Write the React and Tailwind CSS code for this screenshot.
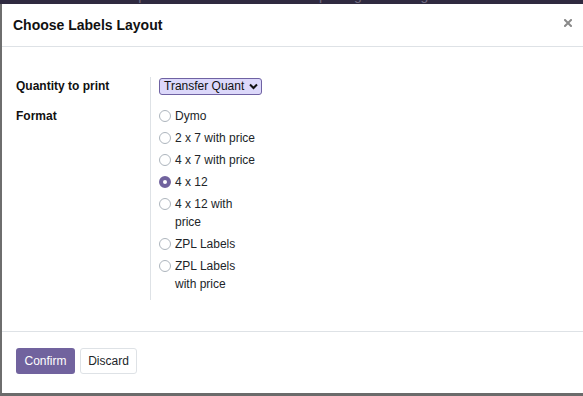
const options = [
  { label: "Dymo" },
  { label: "2 x 7 with price" },
  { label: "4 x 7 with price" },
  { label: "4 x 12", checked: true },
  { label: "4 x 12 with price" },
  { label: "ZPL Labels" },
  { label: "ZPL Labels with price" },
];

const Radio = ({ checked }) =>
  checked ? (
    <span className="mt-[3px] box-border h-[12px] w-[12px] shrink-0 rounded-full border-[4px] border-[#71639e] bg-white" />
  ) : (
    <span className="mt-[3px] box-border h-[12px] w-[12px] shrink-0 rounded-full border border-[#adb5bd] bg-white" />
  );

const App = () => {
  return (
    <div
      className="flex h-[396px] w-[583px] flex-col overflow-hidden bg-[#6b6b6b] text-[#212529]"
      style={{ fontFamily: '"Liberation Sans", Arial, sans-serif' }}
    >
      {/* backdrop navbar peeking out */}
      <div className="h-[4px] shrink-0 overflow-hidden bg-[#2f2a40]">
        <div className="-mt-[13px] flex text-[14px] leading-[16px] text-[#6f6a80]">
          <span className="ml-[43px]">Overview</span>
          <span className="ml-[26px]">Operations</span>
          <span className="ml-[26px]">Products</span>
          <span className="ml-[24px]">Reporting</span>
          <span className="ml-[26px]">Configuration</span>
        </div>
      </div>

      <div className="flex h-[389px] shrink-0">
        <div className="w-[2px] shrink-0 bg-[#6e6e6e]" />
        <div className="flex flex-1 flex-col bg-white">
          {/* header */}
          <div className="flex h-[43px] shrink-0 items-center justify-between border-b border-[#dee2e6] pl-[11px] pr-[11px]">
            <h4 className="text-[14px] font-bold text-[#111]">Choose Labels Layout</h4>
            <svg width="8" height="8" viewBox="0 0 8 8" className="mr-[0px] mt-[-4px]">
              <path d="M1 1 L7 7 M7 1 L1 7" stroke="#8a8a8a" strokeWidth="2" strokeLinecap="square" />
            </svg>
          </div>

          {/* body */}
          <div className="flex flex-1 pl-[14px] pt-[30px] text-[12px]">
            <div className="w-[134px] shrink-0 font-bold text-[#111]">
              <div className="flex h-[18px] items-center">Quantity to print</div>
              <div className="mt-[12px] flex h-[18px] items-center">Format</div>
            </div>
            <div className="h-[223px] border-l border-[#dee2e6] pl-[8px]">
              <div className="flex h-[18px] items-center">
                <div className="flex h-[17px] items-center gap-[5px] rounded-[3px] border border-[#6f62a3] bg-[#dcd8fa] pl-[4px] pr-[3px] text-[12px] text-[#111]">
                  <span>Transfer Quant</span>
                  <svg width="9" height="7" viewBox="0 0 9 7">
                    <path d="M1 1.5 L4.5 5 L8 1.5" fill="none" stroke="#111" strokeWidth="2" />
                  </svg>
                </div>
              </div>
              <div className="mt-[12px] flex w-[100px] flex-col gap-[4px]">
                {options.map((o) => (
                  <div key={o.label} className="flex gap-[4px] leading-[18px]">
                    <Radio checked={o.checked} />
                    <span className="text-[#212529]">{o.label}</span>
                  </div>
                ))}
              </div>
            </div>
          </div>

          {/* footer */}
          <div className="flex h-[62px] shrink-0 gap-[5px] border-t border-[#dee2e6] pl-[14px] pt-[16px] text-[12px]">
            <button className="h-[26px] w-[59px] rounded-[3px] bg-[#71639e] text-white">Confirm</button>
            <button className="h-[26px] w-[57px] rounded-[3px] border border-[#dee2e6] bg-white text-[#212529]">
              Discard
            </button>
          </div>
        </div>
      </div>

      <div className="flex-1 bg-[#6b6b6b]" />
    </div>
  );
};

export default App;
